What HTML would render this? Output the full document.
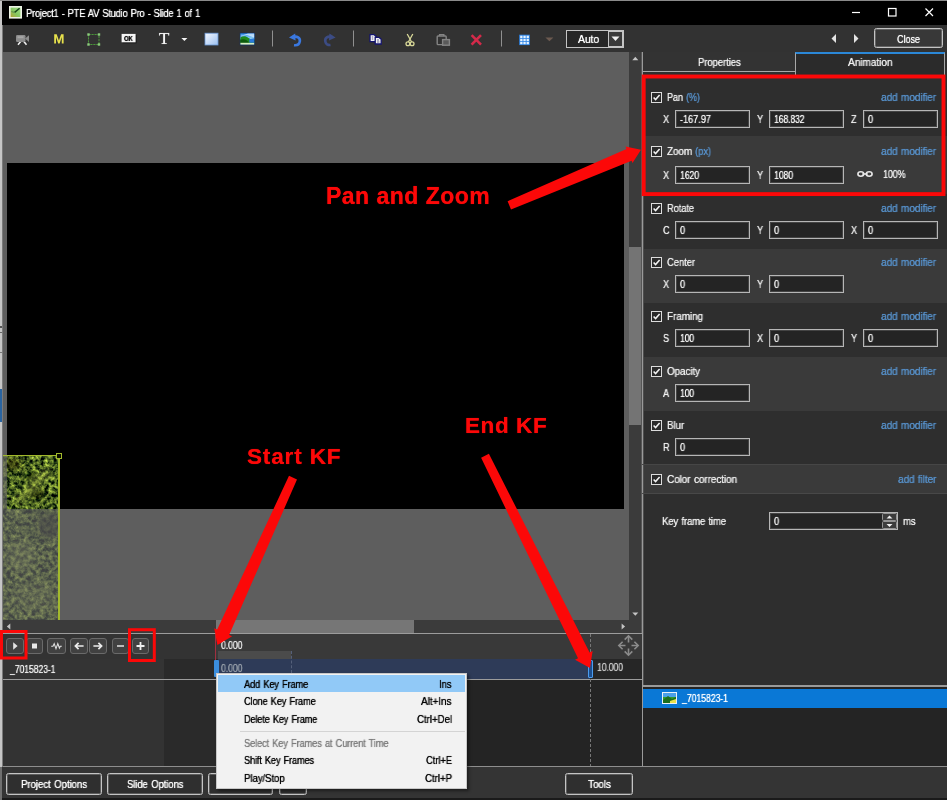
<!DOCTYPE html>
<html><head><meta charset="utf-8"><title>PTE AV Studio</title>
<style>
*{box-sizing:border-box;margin:0;padding:0}
html,body{width:947px;height:800px;overflow:hidden;background:#2e2e2e}
body{font-family:"Liberation Sans",sans-serif;font-size:10.5px;color:#f0f0f0;position:relative}
.a{position:absolute}
.t{position:absolute;white-space:nowrap;will-change:transform;text-shadow:0 0 0.7px currentColor}
</style></head><body>
<div class="a" style="left:0px;top:0px;width:947px;height:25px;background:#000;"></div>
<div class="a" style="left:0px;top:0px;width:947px;height:1px;background:#8a8a8a;"></div>
<svg class="a" style="left:9px;top:6px" width="13" height="13" viewBox="0 0 13 13"><defs><linearGradient id="gic" x1="0" y1="1" x2="1" y2="0"><stop offset="0" stop-color="#b4a436"/><stop offset="0.45" stop-color="#84c860"/><stop offset="1" stop-color="#a4e08c"/></linearGradient></defs><rect width="13" height="12.6" fill="#eef4e6"/><rect x="1.6" y="1.6" width="9.8" height="9.4" fill="url(#gic)"/><path d="M5.6 6.4 L10.6 2.2" stroke="#1c4a1c" stroke-width="1.5" fill="none"/><path d="M2.4 5.6 L5.6 6.4" stroke="#5a8a4a" stroke-width="1" fill="none"/></svg>
<div class="t" style="left:26px;top:5.5px;line-height:14px;color:#fff;letter-spacing:-0.30px;word-spacing:0.9px;transform:scaleX(0.898);transform-origin:0 50%;">Project1 - PTE AV Studio Pro - Slide 1 of 1</div>
<svg class="a" style="left:845px;top:0" width="102" height="25" viewBox="0 0 102 25"><g stroke="#fff" stroke-width="1.2" fill="none"><path d="M7 12.5 H15"/><rect x="43.5" y="8.5" width="7.5" height="7.5"/><path d="M80.5 8.5 L88 16 M88 8.5 L80.5 16"/></g></svg>
<div class="a" style="left:0px;top:25px;width:947px;height:27px;background:#323232;"></div>
<svg class="a" style="left:0;top:25px" width="640" height="27" viewBox="0 25 640 27">
<!-- camera -->
<g>
<path d="M18 44.8 L21.5 40.5 M26.5 44.8 L23 40.5" stroke="#f2f2f2" stroke-width="1.5" fill="none"/>
<rect x="16" y="35" width="9.5" height="7" rx="1.2" fill="#8c8c8c"/>
<path d="M25 38.5 L29 35.2 V42 Z" fill="#8c8c8c"/>
<rect x="17.5" y="36.2" width="6" height="2" fill="#a6a6a6"/>
</g>
<!-- M -->
<path d="M54.2 43.6 V34.3 H56.7 L58.9 40.6 L61.1 34.3 H63.6 V43.6 H61.8 V37 L59.6 43.6 H58.2 L56 37 V43.6 Z" fill="#e6e04c"/>
<!-- select rect -->
<g>
<rect x="88.5" y="34.5" width="10.5" height="10" fill="none" stroke="#4a963a" stroke-width="1" stroke-dasharray="2.2 0.8"/>
<g fill="#8ccc7c"><rect x="87.3" y="33.3" width="2.4" height="2.4"/><rect x="97.8" y="33.3" width="2.4" height="2.4"/><rect x="87.3" y="43.3" width="2.4" height="2.4"/><rect x="97.8" y="43.3" width="2.4" height="2.4"/></g>
</g>
<!-- OK -->
<g>
<rect x="122.6" y="34.8" width="14" height="8.6" fill="#1a1a1a"/>
<rect x="121.6" y="33.9" width="14" height="8.4" fill="#f6f6f6"/>

</g>
<!-- T -->

<path d="M181.4 38 H187.4 L184.4 41 Z" fill="#f4f4f4"/>
<!-- square -->
<defs><linearGradient id="gsq" x1="0" y1="0" x2="1" y2="1"><stop offset="0" stop-color="#f4f8ff"/><stop offset="1" stop-color="#9cc0f0"/></linearGradient>
<linearGradient id="gsky" x1="0" y1="0" x2="0" y2="1"><stop offset="0" stop-color="#2a8ae8"/><stop offset="1" stop-color="#a8e0f8"/></linearGradient></defs>
<rect x="205" y="33.2" width="13" height="11.8" fill="url(#gsq)" stroke="#6a98d8" stroke-width="0.8"/>
<!-- image -->
<g>
<rect x="239.8" y="32.8" width="15" height="12.6" fill="#10306a"/>
<rect x="240.4" y="33.4" width="13.8" height="6" fill="url(#gsky)"/>
<path d="M240.4 36 L247 35 L254.2 37.5 V33.4 H248 Z" fill="#e8f4ff" opacity="0.7"/>
<path d="M240.4 37.5 C243 35.5 246 35.8 248.5 38 C250.5 39.5 252.5 39.5 254.2 39 V43 H240.4 Z" fill="#1e8a1e"/>
<path d="M240.4 40 C243 38.6 246 39.5 248 41.5 L249 43 H240.4 Z" fill="#0c5a0c"/>
<rect x="240.4" y="42.8" width="13.8" height="1.8" fill="#d8f0c0"/>
<path d="M249 39.2 L254.2 38.2 V42.8 H249.5 Z" fill="#2a7ad8"/>
</g>
<rect x="272" y="30.5" width="1" height="16" fill="#909090"/>
<!-- undo -->
<g fill="none" stroke="#3a78e0" stroke-width="2.6" stroke-linecap="butt">
<path d="M292.5 37.2 C297 35.5 300.5 38 299.8 41.5 C299.3 44 297 45.6 294 45.2"/>
</g>
<path d="M289 37.6 L295.2 33.6 L295.6 40.6 Z" fill="#3a78e0"/>
<!-- redo -->
<g fill="none" stroke="#3c4c84" stroke-width="2.6">
<path d="M332.3 37.2 C327.8 35.5 324.6 38 325.3 41.5 C325.8 44 328 45.4 330.5 45"/>
</g>
<path d="M335.6 37.6 L329.4 33.6 L329 40.6 Z" fill="#3c4c84"/>
<rect x="353" y="30.5" width="1" height="16" fill="#909090"/>
<!-- copy -->
<g stroke="#14146e" stroke-width="1.3" fill="#f4f4f4">
<path d="M370 34.6 H374 L376 36.4 V41.6 H370 Z"/>
<path d="M375.2 37.4 H379.2 L381.2 39.2 V44 H375.2 Z"/>
</g>
<path d="M371.8 37 H373.2 M371.8 39 H373.2 M377 40 H379 M377 42 H379.4" stroke="#5a5a8a" stroke-width="0.9"/>
<!-- scissors -->
<g fill="none" stroke="#d8d898" stroke-width="1.3">
<path d="M407.2 34 L411.6 42 M412.8 34 L408.4 42"/>
<circle cx="407.9" cy="43.8" r="1.9"/>
<circle cx="412.1" cy="43.8" r="1.9"/>
</g>
<!-- paste disabled -->
<g fill="none" stroke="#848484" stroke-width="1.4">
<rect x="437.2" y="36" width="9" height="8.6" rx="0.8"/>
<path d="M439.6 36 V34.6 H443.8 V36"/>
<rect x="442.6" y="39.6" width="6.8" height="5.6" fill="#5a5a5a"/>
</g>
<!-- delete X -->
<path d="M471.6 35.2 L481 44.6 M481 35.2 L471.6 44.6" stroke="#d42a4a" stroke-width="2.6" fill="none"/>
<rect x="501" y="30.5" width="1" height="16" fill="#909090"/>
<!-- grid -->
<g>
<rect x="519.2" y="34.7" width="10.6" height="10.4" fill="#2f86e8"/>
<g fill="#e4f2ff">
<rect x="520.2" y="35.7" width="2.3" height="2.3"/><rect x="523.4" y="35.7" width="2.3" height="2.3"/><rect x="526.6" y="35.7" width="2.3" height="2.3"/>
<rect x="520.2" y="38.8" width="2.3" height="2.3"/><rect x="523.4" y="38.8" width="2.3" height="2.3"/><rect x="526.6" y="38.8" width="2.3" height="2.3"/>
<rect x="520.2" y="41.9" width="2.3" height="2.3"/><rect x="523.4" y="41.9" width="2.3" height="2.3"/><rect x="526.6" y="41.9" width="2.3" height="2.3"/>
</g></g>
<path d="M545.4 37.6 H553.4 L549.4 41.2 Z" fill="#6c5a50"/>
</svg>

<div class="t" style="left:159px;top:28.4px;line-height:22px;font-size:17px;color:#f4f4f4;font-family:'Liberation Serif',serif;">T</div>
<div class="t" style="left:124.2px;top:33.8px;line-height:9px;font-size:7px;font-weight:bold;color:#111;letter-spacing:-0.17px;transform:scaleX(0.840);transform-origin:0 50%;">OK</div>
<div class="a" style="left:566px;top:30px;width:58px;height:18px;background:#262626;border:1px solid #c4c4c4;"></div>
<div class="a" style="left:608px;top:31px;width:15px;height:16px;background:#3a3a3a;border:1px solid #c4c4c4;"></div>
<svg class="a" style="left:611px;top:36px" width="9" height="6"><path d="M0.5 0.5 H8.5 L4.5 5 Z" fill="#f0f0f0"/></svg>
<div class="t" style="left:578.3px;top:31.8px;line-height:14px;color:#fff;letter-spacing:-0.12px;transform:scaleX(0.991);transform-origin:0 50%;">Auto</div>
<svg class="a" style="left:830px;top:33px" width="30" height="11"><path d="M6 1 V10 L1.5 5.5 Z M24 1 V10 L28.5 5.5 Z" fill="#e4e4e4"/></svg>
<div class="a" style="left:874px;top:28px;width:69px;height:20px;background:#383838;border:1px solid #c4c4c4;border-radius:2.5px;box-shadow:inset 0 0 0 1px rgba(200,200,200,0.3);"></div>
<div class="t" style="left:897px;top:31.5px;line-height:14px;color:#fff;letter-spacing:-0.12px;transform:scaleX(0.873);transform-origin:0 50%;">Close</div>
<div class="a" style="left:0px;top:52px;width:629px;height:568px;background:#5e5e5e;"></div>
<div class="a" style="left:7px;top:163px;width:616.5px;height:346px;background:#000;"></div>
<svg class="a" style="left:3px;top:456px" width="56" height="164" viewBox="0 0 56 164">
<defs><filter id="fol" x="0" y="0" width="100%" height="100%" color-interpolation-filters="sRGB">
<feTurbulence type="fractalNoise" baseFrequency="0.24 0.24" numOctaves="3" seed="7"/>
<feColorMatrix type="matrix" values="1.5 0 0 0 -0.47  1.6 0 0 0 -0.43  0.55 0 0 0 -0.15  0 0 0 0 1"/>
</filter>
<filter id="bl" x="-30%" y="-30%" width="160%" height="160%"><feGaussianBlur stdDeviation="3"/></filter></defs>
<rect x="0" y="0" width="56" height="164" fill="#4e6a22"/>
<rect x="0" y="0" width="56" height="164" filter="url(#fol)"/>
<g filter="url(#bl)">
<ellipse cx="10" cy="8" rx="8" ry="6" fill="#3a2a08" opacity="0.5"/>
<path d="M14 46 L46 14" stroke="#b8c450" stroke-width="7" opacity="0.45"/>
<ellipse cx="34" cy="38" rx="9" ry="6" fill="#0c1804" opacity="0.55"/>
<ellipse cx="27" cy="20" rx="7" ry="5" fill="#0c1804" opacity="0.5"/>
<ellipse cx="46" cy="70" rx="12" ry="13" fill="#10180c" opacity="0.6"/>
<ellipse cx="18" cy="100" rx="14" ry="16" fill="#a8b860" opacity="0.3"/>
<ellipse cx="30" cy="140" rx="22" ry="14" fill="#a8b860" opacity="0.22"/>
</g>
<rect x="0" y="53" width="56" height="111" fill="#646464" opacity="0.66"/>
<rect x="0" y="0" width="4" height="53" fill="#646464" opacity="0.66"/>
</svg>
<div class="a" style="left:3px;top:455px;width:56px;height:1px;background:#a2b92c"></div>
<div class="a" style="left:58px;top:455px;width:1.5px;height:165px;background:#a2b92c"></div>
<div class="a" style="left:55.5px;top:452.5px;width:6.5px;height:6.5px;border:1.3px solid #a2b92c;background:#0a0c00"></div>

<div class="a" style="left:629px;top:52px;width:13px;height:568px;background:#3b3b3b;"></div>
<div class="a" style="left:629px;top:246.5px;width:12.5px;height:178.5px;background:#747474;"></div>
<svg class="a" style="left:632px;top:56px" width="7" height="5"><path d="M0.3 4.2 H6.3 L3.3 0.8 Z" fill="#c4c4c4"/></svg>
<svg class="a" style="left:632px;top:612px" width="7" height="5"><path d="M0.3 0.4 H6.3 L3.3 3.8 Z" fill="#c4c4c4"/></svg>
<div class="a" style="left:0px;top:620px;width:629px;height:13px;background:#3b3b3b;"></div>
<div class="a" style="left:216px;top:620px;width:198px;height:13px;background:#767676;"></div>
<svg class="a" style="left:6px;top:623px" width="5" height="7"><path d="M4.3 0.6 V6.4 L0.8 3.5 Z" fill="#c4c4c4"/></svg>
<svg class="a" style="left:621px;top:623px" width="5" height="7"><path d="M0.6 0.6 V6.4 L4.1 3.5 Z" fill="#c4c4c4"/></svg>
<div class="a" style="left:629px;top:620px;width:13px;height:13px;background:#3b3b3b;"></div>
<div class="a" style="left:642px;top:52px;width:305px;height:634px;background:#2e2e2e;"></div>
<div class="a" style="left:642px;top:52px;width:153px;height:20px;background:#333;"></div>
<div class="a" style="left:642px;top:71px;width:153px;height:1px;background:#a8a8a8;"></div>
<div class="a" style="left:795px;top:52px;width:150px;height:23px;background:#2b2b2b;border-left:1px solid #a8a8a8;border-right:1px solid #a8a8a8;border-top:2px solid #2b88d8;"></div>
<div class="t" style="left:698.3px;top:54.8px;line-height:14px;letter-spacing:-0.10px;transform:scaleX(0.910);transform-origin:0 50%;">Properties</div>
<div class="t" style="left:847.5px;top:54.8px;line-height:14px;letter-spacing:-0.11px;transform:scaleX(0.972);transform-origin:0 50%;">Animation</div>
<div class="a" style="left:642px;top:78px;width:305px;height:57.5px;background:#2e2e2e;"></div>
<div class="a" style="left:651px;top:92px;width:11px;height:11px;background:#2a2a2a;border:1px solid #dcdcdc;"><svg class="a" style="left:0;top:0" width="9" height="9" viewBox="0 0 9 9"><path d="M1.6 4.4 L3.6 6.6 L7.6 1.9" fill="none" stroke="#f4f4f4" stroke-width="1.5"/></svg></div>
<div class="t" style="left:667px;top:90.3px;line-height:14px;letter-spacing:-0.15px;transform:scaleX(0.873);transform-origin:0 50%;">Pan</div>
<div class="t" style="left:686px;top:90.3px;line-height:14px;color:#5792cc;letter-spacing:-0.13px;transform:scaleX(0.874);transform-origin:0 50%;">(%)</div>
<div class="t" style="left:881px;top:90.3px;line-height:14px;color:#5792cc;letter-spacing:-0.18px;word-spacing:0.9px;transform:scaleX(0.971);transform-origin:0 50%;">add modifier</div>
<div class="t" style="left:663px;top:112.2px;line-height:14px;transform:scaleX(0.88);transform-origin:0 50%;">X</div>
<div class="a" style="left:675px;top:110px;width:75px;height:18px;background:#242424;border:1px solid #b6b6b6;box-shadow:inset 0 0 0 1px rgba(180,180,180,0.22);"></div>
<div class="t" style="left:679.8px;top:112.3px;line-height:14px;color:#f4f4f4;letter-spacing:-0.11px;transform:scaleX(0.888);transform-origin:0 50%;">-167.97</div>
<div class="t" style="left:757px;top:112.2px;line-height:14px;transform:scaleX(0.88);transform-origin:0 50%;">Y</div>
<div class="a" style="left:769px;top:110px;width:75px;height:18px;background:#242424;border:1px solid #b6b6b6;box-shadow:inset 0 0 0 1px rgba(180,180,180,0.22);"></div>
<div class="t" style="left:773.8px;top:112.3px;line-height:14px;color:#f4f4f4;letter-spacing:-0.26px;transform:scaleX(0.840);transform-origin:0 50%;">168.832</div>
<div class="t" style="left:850.5px;top:112.2px;line-height:14px;transform:scaleX(0.88);transform-origin:0 50%;">Z</div>
<div class="a" style="left:863px;top:110px;width:75px;height:18px;background:#242424;border:1px solid #b6b6b6;box-shadow:inset 0 0 0 1px rgba(180,180,180,0.22);"></div>
<div class="t" style="left:867.8px;top:112.3px;line-height:14px;color:#f4f4f4;transform:scaleX(0.88);transform-origin:0 50%;">0</div>
<div class="a" style="left:642px;top:135.5px;width:305px;height:58.5px;background:#3a3a3a;"></div>
<div class="a" style="left:651px;top:146px;width:11px;height:11px;background:#2a2a2a;border:1px solid #dcdcdc;"><svg class="a" style="left:0;top:0" width="9" height="9" viewBox="0 0 9 9"><path d="M1.6 4.4 L3.6 6.6 L7.6 1.9" fill="none" stroke="#f4f4f4" stroke-width="1.5"/></svg></div>
<div class="t" style="left:667px;top:144.3px;line-height:14px;letter-spacing:-0.15px;transform:scaleX(0.950);transform-origin:0 50%;">Zoom</div>
<div class="t" style="left:695px;top:144.3px;line-height:14px;color:#5792cc;letter-spacing:-0.10px;transform:scaleX(0.902);transform-origin:0 50%;">(px)</div>
<div class="t" style="left:881px;top:144.3px;line-height:14px;color:#5792cc;letter-spacing:-0.18px;word-spacing:0.9px;transform:scaleX(0.971);transform-origin:0 50%;">add modifier</div>
<div class="t" style="left:663px;top:168.2px;line-height:14px;transform:scaleX(0.88);transform-origin:0 50%;">X</div>
<div class="a" style="left:675px;top:166px;width:75px;height:18px;background:#242424;border:1px solid #b6b6b6;box-shadow:inset 0 0 0 1px rgba(180,180,180,0.22);"></div>
<div class="t" style="left:679.8px;top:168.3px;line-height:14px;color:#f4f4f4;letter-spacing:-0.21px;transform:scaleX(0.840);transform-origin:0 50%;">1620</div>
<div class="t" style="left:757px;top:168.2px;line-height:14px;transform:scaleX(0.88);transform-origin:0 50%;">Y</div>
<div class="a" style="left:769px;top:166px;width:75px;height:18px;background:#242424;border:1px solid #b6b6b6;box-shadow:inset 0 0 0 1px rgba(180,180,180,0.22);"></div>
<div class="t" style="left:773.8px;top:168.3px;line-height:14px;color:#f4f4f4;letter-spacing:-0.21px;transform:scaleX(0.840);transform-origin:0 50%;">1080</div>
<div class="a" style="left:642px;top:194px;width:305px;height:54.5px;background:#2e2e2e;"></div>
<div class="a" style="left:651px;top:203px;width:11px;height:11px;background:#2a2a2a;border:1px solid #dcdcdc;"><svg class="a" style="left:0;top:0" width="9" height="9" viewBox="0 0 9 9"><path d="M1.6 4.4 L3.6 6.6 L7.6 1.9" fill="none" stroke="#f4f4f4" stroke-width="1.5"/></svg></div>
<div class="t" style="left:667px;top:201.3px;line-height:14px;letter-spacing:-0.11px;transform:scaleX(0.890);transform-origin:0 50%;">Rotate</div>
<div class="t" style="left:881px;top:201.3px;line-height:14px;color:#5792cc;letter-spacing:-0.18px;word-spacing:0.9px;transform:scaleX(0.971);transform-origin:0 50%;">add modifier</div>
<div class="t" style="left:663px;top:223.2px;line-height:14px;transform:scaleX(0.88);transform-origin:0 50%;">C</div>
<div class="a" style="left:675px;top:221px;width:75px;height:18px;background:#242424;border:1px solid #b6b6b6;box-shadow:inset 0 0 0 1px rgba(180,180,180,0.22);"></div>
<div class="t" style="left:679.8px;top:223.3px;line-height:14px;color:#f4f4f4;transform:scaleX(0.88);transform-origin:0 50%;">0</div>
<div class="t" style="left:757px;top:223.2px;line-height:14px;transform:scaleX(0.88);transform-origin:0 50%;">Y</div>
<div class="a" style="left:769px;top:221px;width:75px;height:18px;background:#242424;border:1px solid #b6b6b6;box-shadow:inset 0 0 0 1px rgba(180,180,180,0.22);"></div>
<div class="t" style="left:773.8px;top:223.3px;line-height:14px;color:#f4f4f4;transform:scaleX(0.88);transform-origin:0 50%;">0</div>
<div class="t" style="left:850.5px;top:223.2px;line-height:14px;transform:scaleX(0.88);transform-origin:0 50%;">X</div>
<div class="a" style="left:863px;top:221px;width:75px;height:18px;background:#242424;border:1px solid #b6b6b6;box-shadow:inset 0 0 0 1px rgba(180,180,180,0.22);"></div>
<div class="t" style="left:867.8px;top:223.3px;line-height:14px;color:#f4f4f4;transform:scaleX(0.88);transform-origin:0 50%;">0</div>
<div class="a" style="left:642px;top:248.5px;width:305px;height:54.0px;background:#3a3a3a;"></div>
<div class="a" style="left:651px;top:257px;width:11px;height:11px;background:#2a2a2a;border:1px solid #dcdcdc;"><svg class="a" style="left:0;top:0" width="9" height="9" viewBox="0 0 9 9"><path d="M1.6 4.4 L3.6 6.6 L7.6 1.9" fill="none" stroke="#f4f4f4" stroke-width="1.5"/></svg></div>
<div class="t" style="left:667px;top:255.3px;line-height:14px;letter-spacing:-0.11px;transform:scaleX(0.906);transform-origin:0 50%;">Center</div>
<div class="t" style="left:881px;top:255.3px;line-height:14px;color:#5792cc;letter-spacing:-0.18px;word-spacing:0.9px;transform:scaleX(0.971);transform-origin:0 50%;">add modifier</div>
<div class="t" style="left:663px;top:277.2px;line-height:14px;transform:scaleX(0.88);transform-origin:0 50%;">X</div>
<div class="a" style="left:675px;top:275px;width:75px;height:18px;background:#242424;border:1px solid #b6b6b6;box-shadow:inset 0 0 0 1px rgba(180,180,180,0.22);"></div>
<div class="t" style="left:679.8px;top:277.3px;line-height:14px;color:#f4f4f4;transform:scaleX(0.88);transform-origin:0 50%;">0</div>
<div class="t" style="left:757px;top:277.2px;line-height:14px;transform:scaleX(0.88);transform-origin:0 50%;">Y</div>
<div class="a" style="left:769px;top:275px;width:75px;height:18px;background:#242424;border:1px solid #b6b6b6;box-shadow:inset 0 0 0 1px rgba(180,180,180,0.22);"></div>
<div class="t" style="left:773.8px;top:277.3px;line-height:14px;color:#f4f4f4;transform:scaleX(0.88);transform-origin:0 50%;">0</div>
<div class="a" style="left:642px;top:302.5px;width:305px;height:54.0px;background:#2e2e2e;"></div>
<div class="a" style="left:651px;top:311px;width:11px;height:11px;background:#2a2a2a;border:1px solid #dcdcdc;"><svg class="a" style="left:0;top:0" width="9" height="9" viewBox="0 0 9 9"><path d="M1.6 4.4 L3.6 6.6 L7.6 1.9" fill="none" stroke="#f4f4f4" stroke-width="1.5"/></svg></div>
<div class="t" style="left:667px;top:309.3px;line-height:14px;letter-spacing:-0.12px;transform:scaleX(0.953);transform-origin:0 50%;">Framing</div>
<div class="t" style="left:881px;top:309.3px;line-height:14px;color:#5792cc;letter-spacing:-0.18px;word-spacing:0.9px;transform:scaleX(0.971);transform-origin:0 50%;">add modifier</div>
<div class="t" style="left:663px;top:331.2px;line-height:14px;transform:scaleX(0.88);transform-origin:0 50%;">S</div>
<div class="a" style="left:675px;top:329px;width:75px;height:18px;background:#242424;border:1px solid #b6b6b6;box-shadow:inset 0 0 0 1px rgba(180,180,180,0.22);"></div>
<div class="t" style="left:679.8px;top:331.3px;line-height:14px;color:#f4f4f4;letter-spacing:-0.35px;transform:scaleX(0.840);transform-origin:0 50%;">100</div>
<div class="t" style="left:757px;top:331.2px;line-height:14px;transform:scaleX(0.88);transform-origin:0 50%;">X</div>
<div class="a" style="left:769px;top:329px;width:75px;height:18px;background:#242424;border:1px solid #b6b6b6;box-shadow:inset 0 0 0 1px rgba(180,180,180,0.22);"></div>
<div class="t" style="left:773.8px;top:331.3px;line-height:14px;color:#f4f4f4;transform:scaleX(0.88);transform-origin:0 50%;">0</div>
<div class="t" style="left:850.5px;top:331.2px;line-height:14px;transform:scaleX(0.88);transform-origin:0 50%;">Y</div>
<div class="a" style="left:863px;top:329px;width:75px;height:18px;background:#242424;border:1px solid #b6b6b6;box-shadow:inset 0 0 0 1px rgba(180,180,180,0.22);"></div>
<div class="t" style="left:867.8px;top:331.3px;line-height:14px;color:#f4f4f4;transform:scaleX(0.88);transform-origin:0 50%;">0</div>
<div class="a" style="left:642px;top:356.5px;width:305px;height:54.0px;background:#3a3a3a;"></div>
<div class="a" style="left:651px;top:366px;width:11px;height:11px;background:#2a2a2a;border:1px solid #dcdcdc;"><svg class="a" style="left:0;top:0" width="9" height="9" viewBox="0 0 9 9"><path d="M1.6 4.4 L3.6 6.6 L7.6 1.9" fill="none" stroke="#f4f4f4" stroke-width="1.5"/></svg></div>
<div class="t" style="left:667px;top:364.3px;line-height:14px;letter-spacing:-0.11px;transform:scaleX(0.945);transform-origin:0 50%;">Opacity</div>
<div class="t" style="left:881px;top:364.3px;line-height:14px;color:#5792cc;letter-spacing:-0.18px;word-spacing:0.9px;transform:scaleX(0.971);transform-origin:0 50%;">add modifier</div>
<div class="t" style="left:663px;top:386.2px;line-height:14px;transform:scaleX(0.88);transform-origin:0 50%;">A</div>
<div class="a" style="left:675px;top:384px;width:75px;height:18px;background:#242424;border:1px solid #b6b6b6;box-shadow:inset 0 0 0 1px rgba(180,180,180,0.22);"></div>
<div class="t" style="left:679.8px;top:386.3px;line-height:14px;color:#f4f4f4;letter-spacing:-0.35px;transform:scaleX(0.840);transform-origin:0 50%;">100</div>
<div class="a" style="left:642px;top:410.5px;width:305px;height:53.5px;background:#2e2e2e;"></div>
<div class="a" style="left:651px;top:420px;width:11px;height:11px;background:#2a2a2a;border:1px solid #dcdcdc;"><svg class="a" style="left:0;top:0" width="9" height="9" viewBox="0 0 9 9"><path d="M1.6 4.4 L3.6 6.6 L7.6 1.9" fill="none" stroke="#f4f4f4" stroke-width="1.5"/></svg></div>
<div class="t" style="left:667px;top:418.3px;line-height:14px;letter-spacing:-0.10px;transform:scaleX(0.928);transform-origin:0 50%;">Blur</div>
<div class="t" style="left:881px;top:418.3px;line-height:14px;color:#5792cc;letter-spacing:-0.18px;word-spacing:0.9px;transform:scaleX(0.971);transform-origin:0 50%;">add modifier</div>
<div class="t" style="left:663px;top:440.2px;line-height:14px;transform:scaleX(0.88);transform-origin:0 50%;">R</div>
<div class="a" style="left:675px;top:438px;width:75px;height:18px;background:#242424;border:1px solid #b6b6b6;box-shadow:inset 0 0 0 1px rgba(180,180,180,0.22);"></div>
<div class="t" style="left:679.8px;top:440.3px;line-height:14px;color:#f4f4f4;transform:scaleX(0.88);transform-origin:0 50%;">0</div>
<div class="a" style="left:642px;top:464px;width:305px;height:29.5px;background:#3a3a3a;"></div>
<div class="a" style="left:651px;top:474px;width:11px;height:11px;background:#2a2a2a;border:1px solid #dcdcdc;"><svg class="a" style="left:0;top:0" width="9" height="9" viewBox="0 0 9 9"><path d="M1.6 4.4 L3.6 6.6 L7.6 1.9" fill="none" stroke="#f4f4f4" stroke-width="1.5"/></svg></div>
<div class="t" style="left:667px;top:472.3px;line-height:14px;letter-spacing:-0.15px;word-spacing:0.9px;transform:scaleX(0.963);transform-origin:0 50%;">Color correction</div>
<div class="t" style="left:897.7px;top:472.3px;line-height:14px;color:#5792cc;letter-spacing:-0.18px;word-spacing:0.9px;transform:scaleX(0.970);transform-origin:0 50%;">add filter</div>
<svg class="a" style="left:857px;top:169px" width="16" height="10" viewBox="0 0 16 10"><g fill="none" stroke="#e8e8e8" stroke-width="1.6"><ellipse cx="3.8" cy="5" rx="2.9" ry="2.2"/><ellipse cx="12.2" cy="5" rx="2.9" ry="2.2"/><path d="M5.4 5 H10.6"/></g></svg>
<div class="t" style="left:882.8px;top:168.1px;line-height:13px;font-size:10px;letter-spacing:-0.14px;transform:scaleX(0.897);transform-origin:0 50%;">100%</div>
<div class="t" style="left:661.6px;top:514.3px;line-height:14px;letter-spacing:-0.24px;word-spacing:0.9px;transform:scaleX(0.925);transform-origin:0 50%;">Key frame time</div>
<div class="a" style="left:769px;top:512px;width:129px;height:18px;background:#242424;border:1px solid #b6b6b6;box-shadow:inset 0 0 0 1px rgba(180,180,180,0.22);"></div>
<div class="t" style="left:773.5px;top:514.3px;line-height:14px;transform:scaleX(0.88);transform-origin:0 50%;">0</div>
<div class="a" style="left:882px;top:513px;width:15px;height:8px;background:#3c3c3c;border:1px solid #949494;border-radius:1.5px;"></div>
<div class="a" style="left:882px;top:521px;width:15px;height:8px;background:#3c3c3c;border:1px solid #949494;border-radius:1.5px;"></div>
<svg class="a" style="left:886px;top:515px" width="7" height="13"><path d="M0.5 3.5 H6.5 L3.5 0.5 Z M0.5 9 H6.5 L3.5 12 Z" fill="#eee"/></svg>
<div class="t" style="left:902.6px;top:514.3px;line-height:14px;letter-spacing:-0.18px;transform:scaleX(0.918);transform-origin:0 50%;">ms</div>
<div class="a" style="left:642px;top:685px;width:305px;height:2px;background:#9a9a9a;"></div>
<div class="a" style="left:642px;top:687px;width:305px;height:80px;background:#242424;"></div>
<div class="a" style="left:642px;top:689px;width:305px;height:19px;background:#0a78d6;"></div>
<svg class="a" style="left:662px;top:692px" width="15" height="12" viewBox="0 0 15 12"><rect width="15" height="12" fill="#e8f0f8"/><rect x="1" y="1" width="13" height="4" fill="#4aa0e8"/><rect x="1" y="5" width="13" height="6" fill="#2f9a2f"/><path d="M1 8 L6 4 L10 7 L14 5 V11 H1 Z" fill="#1c6e1c"/><path d="M8 9 L14 7 V11 H8 Z" fill="#e8e04a"/></svg>
<div class="t" style="left:681.5px;top:692.2px;line-height:13px;font-size:10px;color:#fff;letter-spacing:-0.11px;transform:scaleX(0.879);transform-origin:0 50%;">_7015823-1</div>
<div class="a" style="left:641px;top:52px;width:1px;height:715px;background:#565656;"></div>
<div class="a" style="left:642px;top:52px;width:1px;height:715px;background:#9a9a9a;"></div>
<div class="a" style="left:643px;top:75px;width:1px;height:610px;background:#4e4e4e;"></div>
<div class="a" style="left:642px;top:464px;width:305px;height:1px;background:#464646;"></div>
<div class="a" style="left:642px;top:493px;width:305px;height:1px;background:#484848;"></div>
<div class="a" style="left:0px;top:633px;width:642px;height:134px;background:#333;"></div>
<div class="a" style="left:0px;top:633px;width:642px;height:1px;background:#9c9c9c;"></div>
<div class="a" style="left:216px;top:634px;width:426px;height:25px;background:#393939;"></div>
<div class="a" style="left:218px;top:651px;width:73px;height:8px;background:#4b4b4b;"></div>
<div class="a" style="left:0px;top:659px;width:164px;height:20px;background:#343434;"></div>
<div class="a" style="left:164px;top:659px;width:52px;height:108px;background:#2a2a2a;"></div>
<div class="a" style="left:216px;top:659px;width:426px;height:20px;background:#262626;"></div>
<div class="a" style="left:218px;top:659px;width:372px;height:20px;background:#2e3b58;"></div>
<div class="a" style="left:216px;top:680px;width:426px;height:87px;background:#242424;"></div>
<div class="a" style="left:0px;top:679px;width:642px;height:1px;background:#9c9c9c;"></div>
<div class="a" style="left:0px;top:680px;width:164px;height:87px;background:#333;"></div>
<div class="a" style="left:291px;top:651px;width:1px;height:22px;border-left:1px dashed #55607a;"></div>
<div class="a" style="left:590px;top:634px;width:1px;height:133px;border-left:1px dashed #777;"></div>
<div class="a" style="left:215px;top:634px;width:1px;height:26px;background:#a03040;"></div>
<div class="a" style="left:213.5px;top:660px;width:5px;height:17px;background:#3b8ede;border-radius:1px;"></div>
<div class="a" style="left:587.5px;top:660px;width:5px;height:18px;background:#1d4f8f;border:1px solid #4b9cf0;border-radius:1px;"></div>
<div class="t" style="left:221.3px;top:638.8px;line-height:13px;font-size:10px;color:#ececec;letter-spacing:-0.11px;transform:scaleX(0.876);transform-origin:0 50%;">0.000</div>
<div class="t" style="left:221.3px;top:661.5px;line-height:13px;font-size:10px;color:#98a0aa;letter-spacing:-0.11px;transform:scaleX(0.876);transform-origin:0 50%;">0.000</div>
<div class="t" style="left:596.8px;top:661.4px;line-height:13px;font-size:10px;color:#cccccc;letter-spacing:-0.11px;transform:scaleX(0.867);transform-origin:0 50%;">10.000</div>
<div class="t" style="left:9.5px;top:662.8px;line-height:13px;font-size:10px;letter-spacing:-0.11px;transform:scaleX(0.869);transform-origin:0 50%;">_7015823-1</div>
<svg class="a" style="left:617px;top:634px" width="23" height="23" viewBox="0 0 23 23"><g fill="none" stroke="#8c8c8c" stroke-width="1.6"><path d="M11.5 2 V8.5 M11.5 14.5 V21 M2 11.5 H8.5 M14.5 11.5 H21"/><path d="M7.7 5.6 L11.5 1.8 L15.3 5.6 M7.7 17.4 L11.5 21.2 L15.3 17.4 M5.6 7.7 L1.8 11.5 L5.6 15.3 M17.4 7.7 L21.2 11.5 L17.4 15.3"/></g></svg>
<div class="a" style="left:6px;top:638px;width:18px;height:16px;background:#414141;border:1px solid #6a6a6a;border-radius:3px;"><svg class="a" style="left:0;top:0" width="16" height="14"><path d="M6.2 3.3 V10.7 L10.6 7 Z" fill="#e4e4e4"/></svg></div>
<div class="a" style="left:26px;top:638px;width:17px;height:16px;background:#414141;border:1px solid #6a6a6a;border-radius:3px;"><svg class="a" style="left:0;top:0" width="15" height="14"><rect x="5" y="4.5" width="5" height="5" fill="#e8e8e8"/></svg></div>
<div class="a" style="left:47px;top:638px;width:19px;height:16px;background:#414141;border:1px solid #6a6a6a;border-radius:3px;"><svg class="a" style="left:0;top:0" width="17" height="14"><path d="M3.2 7.2 H5 L6.2 4.6 L8 9.6 L9.8 4.6 L11.4 9 L12.3 7.2 H13.8" stroke="#e0e0e0" fill="none" stroke-width="1.1"/></svg></div>
<div class="a" style="left:70px;top:638px;width:18px;height:16px;background:#414141;border:1px solid #6a6a6a;border-radius:3px;"><svg class="a" style="left:0;top:0" width="16" height="14"><path d="M12.6 7 H4.6 M7.6 3.8 L4.4 7 L7.6 10.2" stroke="#ececec" fill="none" stroke-width="1.7"/></svg></div>
<div class="a" style="left:89px;top:638px;width:18px;height:16px;background:#414141;border:1px solid #6a6a6a;border-radius:3px;"><svg class="a" style="left:0;top:0" width="16" height="14"><path d="M3.4 7 H11.4 M8.4 3.8 L11.6 7 L8.4 10.2" stroke="#ececec" fill="none" stroke-width="1.7"/></svg></div>
<div class="a" style="left:112px;top:638px;width:17px;height:16px;background:#414141;border:1px solid #6a6a6a;border-radius:3px;"><svg class="a" style="left:0;top:0" width="15" height="14"><path d="M4 7 H11" stroke="#c8c8c8" fill="none" stroke-width="1.8"/></svg></div>
<div class="a" style="left:132px;top:638px;width:17px;height:16px;background:#414141;border:1px solid #6a6a6a;border-radius:3px;"><svg class="a" style="left:0;top:0" width="15" height="14"><path d="M3.5 7 H11.5 M7.5 3 V11" stroke="#eee" fill="none" stroke-width="1.8"/></svg></div>
<div class="a" style="left:0px;top:766px;width:947px;height:1px;background:#8e8e8e;"></div>
<div class="a" style="left:0px;top:767px;width:947px;height:33px;background:#343434;"></div>
<div class="a" style="left:0px;top:798px;width:947px;height:2px;background:#1a1a1a;"></div>
<div class="a" style="left:6px;top:773px;width:96px;height:22px;background:#2f2f2f;border:1px solid #c4c4c4;border-radius:2.5px;box-shadow:inset 0 0 0 1px rgba(200,200,200,0.3);"></div><div class="t" style="left:21px;top:776.7px;line-height:14px;color:#fff;letter-spacing:-0.16px;word-spacing:0.9px;transform:scaleX(0.938);transform-origin:0 50%;">Project Options</div>
<div class="a" style="left:107px;top:773px;width:96px;height:22px;background:#2f2f2f;border:1px solid #c4c4c4;border-radius:2.5px;box-shadow:inset 0 0 0 1px rgba(200,200,200,0.3);"></div><div class="t" style="left:126.7px;top:776.7px;line-height:14px;color:#fff;letter-spacing:-0.17px;word-spacing:0.9px;transform:scaleX(0.921);transform-origin:0 50%;">Slide Options</div>
<div class="a" style="left:208px;top:773px;width:65px;height:22px;background:#2f2f2f;border:1px solid #c4c4c4;border-radius:2.5px;box-shadow:inset 0 0 0 1px rgba(200,200,200,0.3);"></div>
<div class="a" style="left:279px;top:773px;width:28px;height:22px;background:#2f2f2f;border:1px solid #c4c4c4;border-radius:2.5px;box-shadow:inset 0 0 0 1px rgba(200,200,200,0.3);"></div>
<div class="a" style="left:565px;top:773px;width:68px;height:22px;background:#2f2f2f;border:1px solid #c4c4c4;border-radius:2.5px;box-shadow:inset 0 0 0 1px rgba(200,200,200,0.3);"></div><div class="t" style="left:587.5px;top:776.7px;line-height:14px;color:#fff;letter-spacing:-0.11px;transform:scaleX(0.957);transform-origin:0 50%;">Tools</div>
<div class="a" style="left:216px;top:673px;width:251px;height:116px;background:#f2f2f2;border:1px solid #c8c8c8;box-shadow:2px 2px 3px rgba(0,0,0,0.45);"></div>
<div class="a" style="left:218px;top:675px;width:247px;height:17px;background:#91c9f7;"></div>
<div class="a" style="left:240px;top:730.5px;width:225px;height:1px;background:#d4d4d4;"></div>
<div class="t" style="left:244.1px;top:676.6px;line-height:14px;color:#050505;letter-spacing:-0.26px;word-spacing:0.9px;transform:scaleX(0.898);transform-origin:0 50%;">Add Key Frame</div>
<div class="t" style="left:439.0px;top:676.6px;line-height:14px;color:#050505;letter-spacing:-0.11px;transform:scaleX(0.910);transform-origin:0 50%;">Ins</div>
<div class="t" style="left:244.1px;top:694.4px;line-height:14px;color:#050505;letter-spacing:-0.23px;word-spacing:0.9px;transform:scaleX(0.894);transform-origin:0 50%;">Clone Key Frame</div>
<div class="t" style="left:421.0px;top:694.4px;line-height:14px;color:#050505;letter-spacing:-0.10px;transform:scaleX(0.960);transform-origin:0 50%;">Alt+Ins</div>
<div class="t" style="left:244.1px;top:712.1px;line-height:14px;color:#050505;letter-spacing:-0.22px;word-spacing:0.9px;transform:scaleX(0.882);transform-origin:0 50%;">Delete Key Frame</div>
<div class="t" style="left:416.5px;top:712.1px;line-height:14px;color:#050505;letter-spacing:-0.10px;transform:scaleX(0.934);transform-origin:0 50%;">Ctrl+Del</div>
<div class="t" style="left:244.1px;top:735.6px;line-height:14px;color:#7c7c7c;letter-spacing:-0.24px;word-spacing:0.9px;transform:scaleX(0.899);transform-origin:0 50%;">Select Key Frames at Current Time</div>
<div class="t" style="left:244.1px;top:753.3px;line-height:14px;color:#050505;letter-spacing:-0.22px;word-spacing:0.9px;transform:scaleX(0.887);transform-origin:0 50%;">Shift Key Frames</div>
<div class="t" style="left:425.5px;top:753.3px;line-height:14px;color:#050505;letter-spacing:-0.11px;transform:scaleX(0.900);transform-origin:0 50%;">Ctrl+E</div>
<div class="t" style="left:244.1px;top:771.0px;line-height:14px;color:#050505;letter-spacing:-0.10px;transform:scaleX(0.923);transform-origin:0 50%;">Play/Stop</div>
<div class="t" style="left:424.5px;top:771.0px;line-height:14px;color:#050505;letter-spacing:-0.11px;transform:scaleX(0.935);transform-origin:0 50%;">Ctrl+P</div>
<div class="a" style="left:0px;top:1px;width:2px;height:766px;background:#c6c6c6;"></div>
<div class="a" style="left:0px;top:767px;width:2px;height:33px;background:#707070;"></div>
<div class="a" style="left:0px;top:389px;width:2px;height:33px;background:#2a64a0;"></div>
<div class="a" style="left:0px;top:326px;width:2px;height:2px;background:#555;"></div>
<div class="a" style="left:0px;top:332px;width:2px;height:1px;background:#666;"></div>
<div class="a" style="left:0px;top:352px;width:2px;height:1px;background:#777;"></div>
<div class="a" style="left:2px;top:25px;width:1px;height:742px;background:#7a7a7a;"></div>
<svg class="a" style="left:0;top:0" width="947" height="800" viewBox="0 0 947 800"><g fill="#fc0808"><polygon points="511.0,209.5 631.6,160.8 632.5,163.1 641.0,149.8 625.5,146.6 626.5,148.9 507.6,201.3"/><polygon points="289.0,475.8 217.2,629.6 214.2,628.2 217.4,645.0 232.1,636.3 229.1,634.9 297.0,479.4"/><polygon points="481.1,457.7 578.0,658.3 575.0,659.8 590.0,668.0 592.6,651.1 589.6,652.6 488.9,453.7"/></g><g fill="none" stroke="#fc0808" stroke-width="3.9"><rect x="643.7" y="76.5" width="299.8" height="117.6"/><rect x="1.5" y="631.5" width="24.5" height="26.5" stroke-width="3"/><rect x="129.5" y="629.7" width="24.8" height="30.8" stroke-width="3"/></g></svg>
<div class="t" style="left:325.9px;top:181.0px;line-height:30px;font-size:23px;font-weight:bold;color:#fc0808;letter-spacing:0.48px;">Pan and Zoom</div>
<div class="t" style="left:247.4px;top:441.7px;line-height:29px;font-size:22.5px;font-weight:bold;color:#fc0808;letter-spacing:0.86px;">Start KF</div>
<div class="t" style="left:464.7px;top:411.3px;line-height:29px;font-size:22.5px;font-weight:bold;color:#fc0808;letter-spacing:0.59px;">End KF</div>
</body></html>
